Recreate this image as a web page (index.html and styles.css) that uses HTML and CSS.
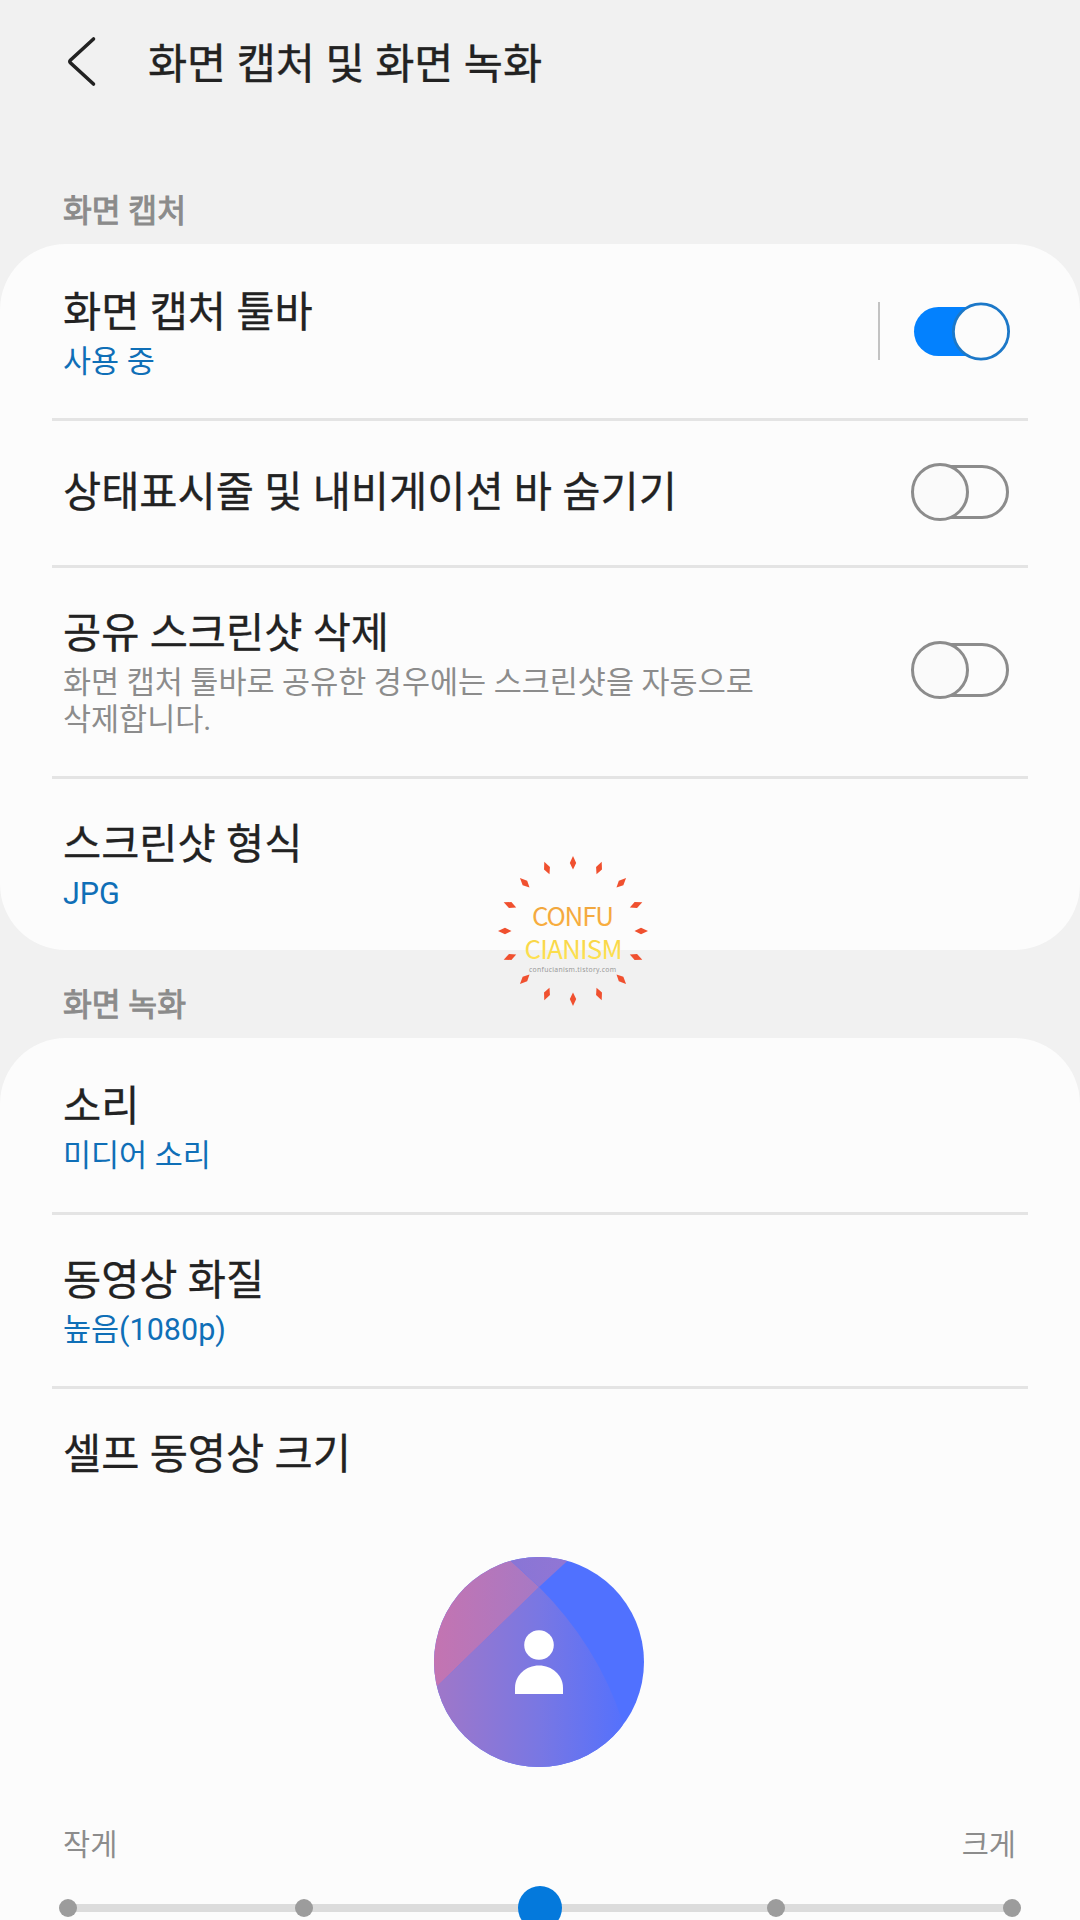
FILE: index.html
```html
<!DOCTYPE html>
<html lang="ko">
<head>
<meta charset="utf-8">
<title>화면 캡처 및 화면 녹화</title>
<link rel="stylesheet" href="styles.css">
</head>
<body>
<div class="screen">
  <header class="header">
    <svg class="back" width="32" height="52" viewBox="0 0 32 52"><path d="M27.5 4 L4.6 25 Q3 26.5 4.6 28 L27.5 49" /></svg>
    <h1 class="header-title">화면 캡처 및 화면 녹화</h1>
  </header>

  <h2 class="section-label">화면 캡처</h2>
  <section class="card">
    <div class="row">
      <div class="row-text">
        <div class="row-title">화면 캡처 툴바</div>
        <div class="row-value">사용 중</div>
      </div>
      <div class="split"></div>
      <svg class="toggle" width="104" height="60" viewBox="0 0 104 60">
        <rect class="track-on" x="6" y="6" width="92" height="49" rx="24.5" />
        <circle class="thumb-on" cx="73" cy="30.5" r="27.6" />
      </svg>
    </div>
    <div class="row row-single">
      <div class="row-text"><div class="row-title">상태표시줄 및 내비게이션 바 숨기기</div></div>
      <svg class="toggle" width="104" height="60" viewBox="0 0 104 60">
        <rect class="track-off" x="14" y="4.5" width="85.5" height="51" rx="25.5" />
        <circle class="thumb-off" cx="32" cy="30" r="27.5" />
      </svg>
    </div>
    <div class="row">
      <div class="row-text">
        <div class="row-title">공유 스크린샷 삭제</div>
        <div class="row-desc">화면 캡처 툴바로 공유한 경우에는 스크린샷을 자동으로<br>삭제합니다.</div>
      </div>
      <svg class="toggle" width="104" height="60" viewBox="0 0 104 60">
        <rect class="track-off" x="14" y="4.5" width="85.5" height="51" rx="25.5" />
        <circle class="thumb-off" cx="32" cy="30" r="27.5" />
      </svg>
    </div>
    <div class="row">
      <div class="row-text">
        <div class="row-title">스크린샷 형식</div>
        <div class="row-value">JPG</div>
      </div>
    </div>
  </section>

  <h2 class="section-label">화면 녹화</h2>
  <section class="card card-last">
    <div class="row">
      <div class="row-text">
        <div class="row-title">소리</div>
        <div class="row-value">미디어 소리</div>
      </div>
    </div>
    <div class="row">
      <div class="row-text">
        <div class="row-title">동영상 화질</div>
        <div class="row-value">높음(1080p)</div>
      </div>
    </div>
    <div class="size-setting">
      <div class="row-title">셀프 동영상 크기</div>
      <svg class="avatar" width="210" height="210" viewBox="0 0 210 210">
        <defs>
          <clipPath id="disc"><circle cx="105" cy="105" r="105" /></clipPath>
          <linearGradient id="body" gradientUnits="userSpaceOnUse" x1="0" y1="0" x2="210" y2="0">
            <stop offset="0" stop-color="#a077c8" /><stop offset=".5" stop-color="#7977e3" /><stop offset=".9" stop-color="#5571fc" />
          </linearGradient>
          <linearGradient id="corner" gradientUnits="userSpaceOnUse" x1="0" y1="0" x2="130" y2="0">
            <stop offset="0" stop-color="#c474b1" /><stop offset="1" stop-color="#a07ac9" />
          </linearGradient>
          <linearGradient id="tip" gradientUnits="userSpaceOnUse" x1="78" y1="0" x2="133" y2="0">
            <stop offset="0" stop-color="#8975d6" /><stop offset="1" stop-color="#9176d4" />
          </linearGradient>
        </defs>
        <g clip-path="url(#disc)">
          <rect width="210" height="210" fill="#5071ff" />
          <path d="M-5 137 L105 30 Q163 88 188 163 L196 210 H-5 Z" fill="url(#body)" />
          <path d="M-5 -5 H68 L78 5 L105 30 L-5 137 Z" fill="url(#corner)" />
          <path d="M68 -5 H143 L105 30 L78 5 Z" fill="url(#tip)" />
        </g>
        <circle cx="105" cy="88" r="14.8" fill="#fff" />
        <path d="M81 137 V131 C81 118 92 108.500 105 108.500 S129 118 129 131 V137 Z" fill="#fff" />
      </svg>
      <div class="slider-labels"><span>작게</span><span>크게</span></div>
      <div class="slider">
        <i class="stop"></i><i class="stop"></i><i class="stop stop-active"></i><i class="stop"></i><i class="stop"></i>
      </div>
    </div>
  </section>

  <svg class="badge" width="160" height="160" viewBox="-80 -80 160 160">
    <defs>
      <path id="ray" d="M0 -75 L3.200 -68 L0 -61.500 L-3.200 -68 Z" />
      <linearGradient id="gold" x1="0" y1="0" x2="0" y2="1"><stop offset="0" stop-color="#eda33c" /><stop offset="1" stop-color="#fbb040" /></linearGradient>
      <linearGradient id="lemon" x1="0" y1="0" x2="0" y2="1"><stop offset="0" stop-color="#f6d044" /><stop offset="1" stop-color="#ffe552" /></linearGradient>
    </defs>
    <g fill="#f0502f">
      <use href="#ray" /><use href="#ray" transform="rotate(22.500)" /><use href="#ray" transform="rotate(45)" /><use href="#ray" transform="rotate(67.500)" />
      <use href="#ray" transform="rotate(90)" /><use href="#ray" transform="rotate(112.500)" /><use href="#ray" transform="rotate(135)" /><use href="#ray" transform="rotate(157.500)" />
      <use href="#ray" transform="rotate(180)" /><use href="#ray" transform="rotate(202.500)" /><use href="#ray" transform="rotate(225)" /><use href="#ray" transform="rotate(247.500)" />
      <use href="#ray" transform="rotate(270)" /><use href="#ray" transform="rotate(292.500)" /><use href="#ray" transform="rotate(315)" /><use href="#ray" transform="rotate(337.500)" />
    </g>
    <text class="badge-name" x="0" y="-5" textLength="82" fill="url(#gold)">CONFU</text>
    <text class="badge-name" x=".5" y="28" textLength="98" fill="url(#lemon)">CIANISM</text>
    <text class="badge-site" x="-.5" y="40.500" textLength="87">confucianism.tistory.com</text>
  </svg>
</div>
</body>
</html>
```

FILE: styles.css
```css
* { box-sizing: border-box; }

body {
  margin: 0;
  background: #f1f1f1;
  font-family: Roboto, "Noto Sans CJK KR", sans-serif;
  color: #222;
}

.screen {
  position: relative;
  width: 1080px;
  height: 1920px;
  overflow: hidden;
}

.header {
  display: flex;
  align-items: flex-start;
  gap: 50px;
  height: 156px;
  padding: 35px 66px 0;
}

.back {
  flex: none;
  fill: none;
  stroke: #222;
  stroke-width: 3.6;
  stroke-linecap: round;
}

.header-title {
  margin: 0;
  font-size: 42.5px;
  font-weight: 400;
  line-height: 60px;
  -webkit-text-stroke: .4px #222;
}

.section-label {
  margin: 0;
  padding: 37px 63px 14px;
  font-size: 31.3px;
  font-weight: 400;
  line-height: 37px;
  color: #8b8b8b;
  -webkit-text-stroke: 1px #8b8b8b;
}

.card {
  padding-top: 3px;
  border-radius: 66px;
  background: #fcfcfc;
}

.card-last { border-radius: 66px 66px 0 0; }

.row {
  display: flex;
  align-items: center;
  margin: 0 52px;
  padding: 35px 15px 38px 11px;
  border-bottom: 3px solid #e4e4e4;
}

.row:last-child { border-bottom: 0; }

.row-single { padding-top: 41px; padding-bottom: 42px; }

.row-text { flex: 1; }

.row-title {
  font-size: 41.5px;
  line-height: 61px;
  -webkit-text-stroke: .3px #222;
}

.row-value,
.row-desc {
  font-size: 30.5px;
  line-height: 37px;
}

.row-value { color: #0f6fb7; }

.row-desc { color: #8c8c8c; }

.split {
  width: 2px;
  height: 58px;
  margin-right: 28px;
  background: #c3c3c3;
}

.toggle { flex: none; margin: 0 1px 1px 0; }

.track-on { fill: #0381fe; }
.thumb-on { fill: #fcfcfc; stroke: #1c78c8; stroke-width: 2.8; }
.track-off { fill: none; stroke: #8c8c8c; stroke-width: 3; }
.thumb-off { fill: #fafafa; stroke: #8c8c8c; stroke-width: 3; }

.size-setting {
  display: flex;
  flex-direction: column;
  padding: 35px 64px 0 63px;
}

.avatar { align-self: center; margin: 72px 1px 60px 0; }

.slider-labels {
  display: flex;
  justify-content: space-between;
  font-size: 29.5px;
  line-height: 37px;
  color: #8c8c8c;
}

.slider {
  display: flex;
  align-items: center;
  justify-content: space-between;
  height: 44px;
  margin: 22px -5px 0 -4px;
  background: linear-gradient(#dcdcdc, #dcdcdc) center / 944px 8px no-repeat;
}

.stop {
  width: 18px;
  height: 18px;
  border-radius: 50%;
  background: #9c9c9c;
}

.stop-active {
  width: 44px;
  height: 44px;
  margin: 0 -13px;
  background: #0479dc;
}

.badge {
  position: absolute;
  left: 493px;
  top: 851px;
}

.badge-name {
  font-family: "Noto Sans CJK KR", sans-serif;
  font-size: 26px;
  text-anchor: middle;
}

.badge-site {
  font-family: "Noto Sans", sans-serif;
  font-size: 6.8px;
  text-anchor: middle;
  fill: #999;
}
```
